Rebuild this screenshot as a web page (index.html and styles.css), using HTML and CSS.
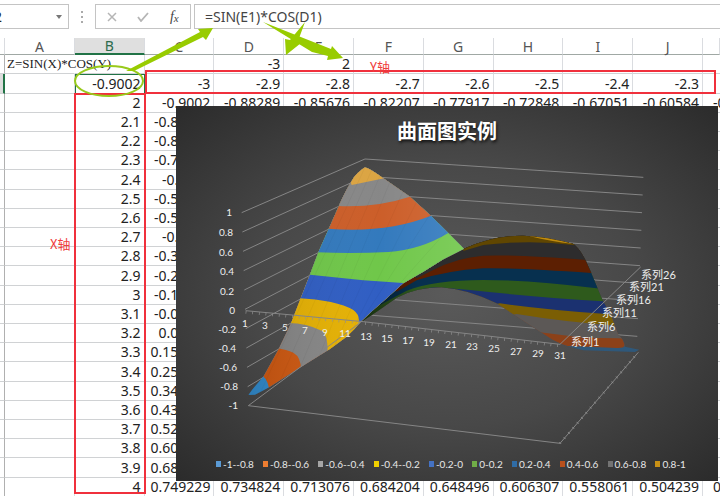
FILE: index.html
```html
<!DOCTYPE html>
<html lang="zh-CN">
<head>
<meta charset="utf-8">
<title>曲面图实例</title>
<link rel="stylesheet" href="styles.css">
</head>
<body>
<header class="formula-bar">
  <div class="name-box">
    <input class="name-input" type="text" value="B2" aria-label="名称框">
    <button class="name-toggle" type="button" aria-label="展开"><svg width="6" height="4" viewBox="0 0 6 4"><path d="M0 0h6L3 4z" fill="#777"/></svg></button>
  </div>
  <svg class="grip" width="2" height="12" viewBox="0 0 2 12"><path d="M0 0h2v2H0zM0 5h2v2H0zM0 10h2v2H0z" fill="#aaa"/></svg>
  <div class="actions">
    <button type="button" aria-label="取消"><svg width="10" height="10" viewBox="0 0 10 10"><path d="M1 1l8 8M9 1L1 9" stroke="#b5b5b5" stroke-width="1.5" fill="none"/></svg></button>
    <button type="button" aria-label="输入"><svg width="12" height="10" viewBox="0 0 12 10"><path d="M1 5l3 4 7-8" stroke="#b5b5b5" stroke-width="1.8" fill="none"/></svg></button>
    <button type="button" class="fx" aria-label="插入函数"><i>f</i><i class="fx-small">x</i></button>
  </div>
  <input class="formula" type="text" value="=SIN(E1)*COS(D1)" aria-label="编辑栏">
</header>
<main class="sheet">
  <table class="grid">
    <colgroup><col class="col-head"><col span="10"><col class="col-last"></colgroup>
    <thead><tr><th></th><th>A</th><th class="active">B</th><th>C</th><th>D</th><th>E</th><th>F</th><th>G</th><th>H</th><th>I</th><th>J</th><th></th></tr></thead>
    <tbody id="cells"></tbody>
  </table>
</main>

<figure class="chart">
  <figcaption class="chart-title">曲面图实例</figcaption>
  <svg class="plot" viewBox="176 106 542 375" aria-hidden="true">
    <defs>
      <clipPath id="front"><path d="M405 67Q380 84 370 100Q345 140 330 175L297 250L265 322L240 388L212 460L183 535L148 608L100 695Q70 728 55 750L75 749L115 728L213 666L300 612L350 575Q375 552 392 530L430 495L470 460L520 415L580 380L640 343L702 311L655 264L603 212L540 155L460 100Q425 74 405 67Z"/></clipPath>
      <clipPath id="rear"><path d="M392 532L430 495L470 460L520 415L580 380L640 343L702 311Q790 271 880 272Q950 275 1030 297Q1055 315 1080 375L1115 460L1140 505L1165 570Q1180 580 1185 605L1228 614L1215 621L1060 616Q985 600 950 573Q870 520 800 475Q710 432 635 427Q560 427 500 458L440 500Z"/></clipPath>
      <linearGradient id="glow" x1="0" x2="1" y1="0" y2="0"><stop offset="0" stop-color="#000" stop-opacity=".12"/><stop offset=".6" stop-color="#fff" stop-opacity=".02"/><stop offset="1" stop-color="#fff" stop-opacity=".12"/></linearGradient>
      <linearGradient id="fold" x1="0" x2="1" y1="0" y2="0"><stop offset="0" stop-color="#000" stop-opacity=".5"/><stop offset=".35" stop-color="#000" stop-opacity="0"/></linearGradient>
    </defs>
    <g transform="translate(230 145) scale(.33333)">
      <g class="lines" id="gridlines"></g>
      <path class="lines" d="M55 782L990 895L1225 622"/>
      <path class="ticks" d="M990 895L1225 622"/>
      <g clip-path="url(#rear)">
        <path fill="#2f587a" d="M380 260h860v370H380z"/>
        <path fill="#8c4119" d="M380 260H1240V590L1184 592Q1190 610 1160 609L1040 604L380 600z"/>
        <path fill="#5c5856" d="M380 260H1240V582L1160 580L1060 578L930 562L380 600z"/>
        <path fill="#7b5e04" d="M380 260H1240V545L1140 540Q1000 530 860 507L380 590z"/>
        <path fill="#1b3170" d="M380 260H1240V515L1130 507Q960 495 810 475L380 570z"/>
        <path fill="#2e5a1c" d="M380 260H1240V475L1118 469Q900 455 720 435L620 427Q540 430 470 485L380 560z"/>
        <path fill="#07304f" d="M380 260H1240V435L1100 430Q900 405 760 405Q610 405 530 437L450 480L390 530z"/>
        <path fill="#5c1f02" d="M380 260H1240V388L1083 384Q850 368 760 370Q650 377 560 406L500 440z"/>
        <path fill="#2d2c2d" d="M380 260H1240V350L1070 345Q850 328 760 332Q680 338 610 375L560 400z"/>
        <path fill="#604601" d="M700 260H1240V300L1030 300Q900 283 760 300L700 318z"/>
        <path fill="#c08b0e" d="M900 266Q980 278 1030 297Q960 289 900 274z"/>
        <path fill="url(#fold)" d="M390 260h500v280H390z"/>
      </g>
      <g clip-path="url(#front)">
        <path fill="#318bcd" d="M40 50h680v720H40z"/>
        <path fill="#ce570f" d="M40 50H720V760H120Q120 710 98 692L40 680z"/>
        <path fill="#858585" d="M40 50H720V700H212Q220 640 190 623Q170 614 140 609L40 600z"/>
        <path fill="#e5b000" d="M40 50H720V670H290Q300 570 275 557Q230 535 175 534L40 530z"/>
        <path fill="#2c5bc2" d="M40 50H720V532H386Q390 510 370 495Q320 465 200 459L40 450z"/>
        <path fill="#6dc646" d="M40 50H720V420L530 415L400 406L240 389L40 380z"/>
        <path fill="#2f77bc" d="M40 50H720V240L655 264Q570 315 475 321Q370 326 262 322L40 320z"/>
        <path fill="#cb5b25" d="M40 50H720V175L603 212Q470 265 295 251L40 250z"/>
        <path fill="#858585" d="M40 50H720V120L540 155Q440 188 325 183L40 180z"/>
        <path fill="#dba33f" d="M340 50H500V90L463 100L365 120z"/>
        <path fill="url(#glow)" d="M50 60h660v700H50z"/>
        <path class="mesh" d="M405 67L90 745M425 75L145 720M450 92L205 680M480 110L265 640M520 137L315 600M560 170L360 570M600 208L400 520M650 258L470 460"/>
      </g>
      <path class="lines" d="M47 497L400 530L990 598L1232 366"/>
      <path class="lines" d="M55 782L392 532"/>
      <path class="ticks" d="M47 502L400 535L990 603"/>
    </g>
    <g class="labels" text-anchor="end">
      <text x="232" y="216">1</text><text x="233" y="236">0.8</text><text x="233" y="256">0.6</text><text x="234" y="275">0.4</text><text x="234" y="295">0.2</text><text x="235" y="314">0</text><text x="236" y="333">-0.2</text><text x="236" y="352">-0.4</text><text x="237" y="371">-0.6</text><text x="238" y="390">-0.8</text><text x="238" y="409">-1</text>
    </g>
    <g class="labels" text-anchor="middle">
      <text x="245" y="327">1</text><text x="265" y="329">3</text><text x="285" y="331">5</text><text x="305" y="334">7</text><text x="325" y="336">9</text><text x="345" y="337">11</text><text x="366" y="340">13</text><text x="387" y="342">15</text><text x="408" y="344">17</text><text x="429" y="346">19</text><text x="451" y="348">21</text><text x="472" y="350">23</text><text x="494" y="352">25</text><text x="516" y="355">27</text><text x="538" y="357">29</text><text x="560" y="359">31</text>
    </g>
    <g class="labels series">
      <text x="641" y="279">系列26</text><text x="629" y="291">系列21</text><text x="616" y="304">系列16</text><text x="602" y="317">系列11</text><text x="587" y="331">系列6</text><text x="571" y="346">系列1</text>
    </g>
  </svg>
  <ul class="legend">
    <li class="c1">-1--0.8</li><li class="c2">-0.8--0.6</li><li class="c3">-0.6--0.4</li><li class="c4">-0.4--0.2</li><li class="c5">-0.2-0</li><li class="c6">0-0.2</li><li class="c7">0.2-0.4</li><li class="c8">0.4-0.6</li><li class="c9">0.6-0.8</li><li class="c10">0.8-1</li>
  </ul>
</figure>

<svg class="notes" width="720" height="496" viewBox="0 0 720 496" aria-hidden="true">
  <g fill="none" stroke="#f0303c" stroke-width="2">
    <path d="M75 94H145V493H75z"/>
    <path d="M146 71H715V93H146z"/>
  </g>
  <ellipse cx="109" cy="81" rx="34" ry="15" fill="none" stroke="#98ca1c" stroke-width="2"/>
  <g fill="#98cc00">
    <path d="M126 71L200 32L198 29L213 28L206 40L203 37L134 71z"/>
    <path d="M305 22L298 41L301 43L286 55L285 39L290 40z"/>
    <path d="M263 22L331 49L332 46L343 58L327 60L328 56L312 52z"/>
  </g>
  <text x="370" y="72">Y轴</text>
  <text x="50" y="249">X轴</text>
</svg>
<script src="script.js"></script>
</body>
</html>
```
FILE: styles.css
```css
* { box-sizing: border-box; }
body {
  margin: 0;
  min-height: 100vh;
  position: relative;
  overflow: hidden;
  background: #fff;
  color: #222;
  font-family: "Noto Sans", "Noto Sans CJK SC", sans-serif;
  font-size: 14px;
}
button, input { font: inherit; color: inherit; padding: 0; border: 0; background: none; outline: 0; }

.formula-bar { display: flex; align-items: center; height: 38px; padding: 4px 0 9px; }
.name-box { display: flex; align-items: center; width: 69px; height: 25px; border: 1px solid #c4c4c4; border-left: 0; overflow: hidden; }
.name-input { flex: 1; min-width: 0; margin-left: -16px; padding-left: 1px; }
.name-toggle { display: flex; width: 12px; }
.grip { margin: 0 12px; }
.actions { display: flex; align-items: center; justify-content: space-around; width: 96px; height: 25px; border: 1px solid #c4c4c4; }
.actions button { display: flex; align-items: center; justify-content: center; width: 24px; height: 20px; }
.actions .fx { font: italic 14px "Liberation Serif", serif; color: #444; }
.fx-small { font-size: 11px; padding-top: 3px; }
.formula { flex: 1; min-width: 0; height: 25px; margin-left: 3px; padding-left: 10px; border: 1px solid #c4c4c4; border-right: 0; color: #444; }

.grid { width: 100%; table-layout: fixed; border-collapse: separate; border-spacing: 0; }
.col-head { width: 5px; }
.col-last { width: 17px; }
.grid th, .grid td { padding: 0; line-height: 16px; white-space: nowrap; border-right: 1px solid #dadce0; border-bottom: 1px solid #d0d2d4; }
.grid th { height: 17px; line-height: 15px; font-weight: 400; color: #555; border-bottom-color: #a0a8a4; }
.grid th.active { background: #dfdfdf; color: #2c6b4c; border-bottom: 2px solid #217346; }
.grid td { height: 19px; line-height: 18px; padding-right: 3px; text-align: right; }
.grid tbody tr:nth-child(5n + 2) td { height: 20px; }
.grid td:first-child { padding: 0; border-right-color: #b0b0b0; }
.grid td.active { background: #ddd; border-right: 2px solid #217346; }
.grid td.selected { outline: 1px solid #217346; outline-offset: -1px; }
.grid td.title { padding: 0 0 0 2px; text-align: left; font-family: "Liberation Serif", serif; font-size: 13px; border-right-color: transparent; }
.grid td.last { padding: 0 0 0 10px; text-align: left; border-right: 0; }

.chart {
  position: absolute;
  left: 176px;
  top: 106px;
  width: 542px;
  height: 375px;
  margin: 0;
  display: grid;
  grid-template-rows: 1fr auto;
  background: radial-gradient(ellipse at 50% 50%, #5a5a5a 0%, #484848 50%, #2b2b2b 100%);
  color: #e8e8e8;
}
.chart-title { grid-area: 1 / 1; padding-top: 11px; text-align: center; line-height: 28px; font-size: 20px; font-weight: 700; color: #fff; text-shadow: 1px 2px 3px #111; font-family: "Noto Sans CJK SC", sans-serif; }
.plot { position: absolute; inset: 0; width: 100%; height: 100%; }
.lines { fill: none; stroke: #868686; stroke-width: 3; }
.ticks { fill: none; stroke: #929292; stroke-width: 8; stroke-dasharray: 2 18; }
.mesh { fill: none; stroke: #000; stroke-opacity: 0.06; stroke-width: 2; }
.labels { font-family: Lato, "Noto Sans CJK SC", sans-serif; font-size: 10px; fill: #eee; }
.series { font-size: 11px; }
.legend { position: relative; grid-area: 2 / 1; display: flex; justify-content: space-between; margin: 0; padding: 0 32px 10px 40px; list-style: none; font: 10px/14px Lato, sans-serif; }
.legend li { display: flex; align-items: center; gap: 2px; white-space: nowrap; }
.legend li::before { content: ""; width: 5px; height: 6px; background: currentColor; }
.c1::before { color: #5b9bd5; }
.c2::before { color: #ed7d31; }
.c3::before { color: #a5a5a5; }
.c4::before { color: #f0d000; }
.c5::before { color: #4472c4; }
.c6::before { color: #70ad47; }
.c7::before { color: #2f6ca6; }
.c8::before { color: #b8501c; }
.c9::before { color: #737373; }
.c10::before { color: #c89015; }

.notes { position: absolute; left: 0; top: 0; pointer-events: none; }
.notes text { fill: #f03c3c; font-family: "Noto Sans CJK SC", sans-serif; font-size: 13px; }
```
FILE: script.js
```js
// Z = SIN(X) * COS(Y): X runs down column B, Y runs across row 2.
const body = document.getElementById("cells");
const ys = [-3, -2.9, -2.8, -2.7, -2.6, -2.5, -2.4, -2.3, -2.2];

function format(value) {
  return String(Number(value.toFixed(value < 0 ? 5 : 6)));
}

function addRow(values, classes = {}) {
  const row = body.insertRow();
  values.forEach((value, index) => {
    const cell = row.insertCell();
    cell.textContent = value;
    if (index === 11) cell.className = "last";
    if (classes[index]) cell.className = classes[index];
  });
}

addRow(["", "Z=SIN(X)*COS(Y)", "", "", "-3", "2", "", "", "", "", "", ""], { 1: "title" });
addRow(["", "", "-0.9002", ...ys.slice(0, 8), ""], { 0: "active", 2: "selected" });
for (let i = 20; i <= 40; i++) {
  const x = i / 10;
  // The chart covers everything right of column C between the first and last rows.
  const covered = i > 20 && i < 40;
  addRow(["", "", x, ...ys.map((y, n) => (covered && n > 0 ? "" : format(Math.sin(x) * Math.cos(y))))]);
}

// Value gridlines on the side and back walls of the plot.
const lines = document.getElementById("gridlines");
for (let i = 0; i <= 9; i++) {
  const path = document.createElementNS("http://www.w3.org/2000/svg", "path");
  const left = 203 + i * 58;
  const corner = 42 + i * 52;
  const right = 97 + i * 53;
  path.setAttribute("d", `M${35 + i * 2} ${left}L${405 + i} ${corner}L${1240 - i * 2} ${right}`);
  lines.appendChild(path);
}
```
